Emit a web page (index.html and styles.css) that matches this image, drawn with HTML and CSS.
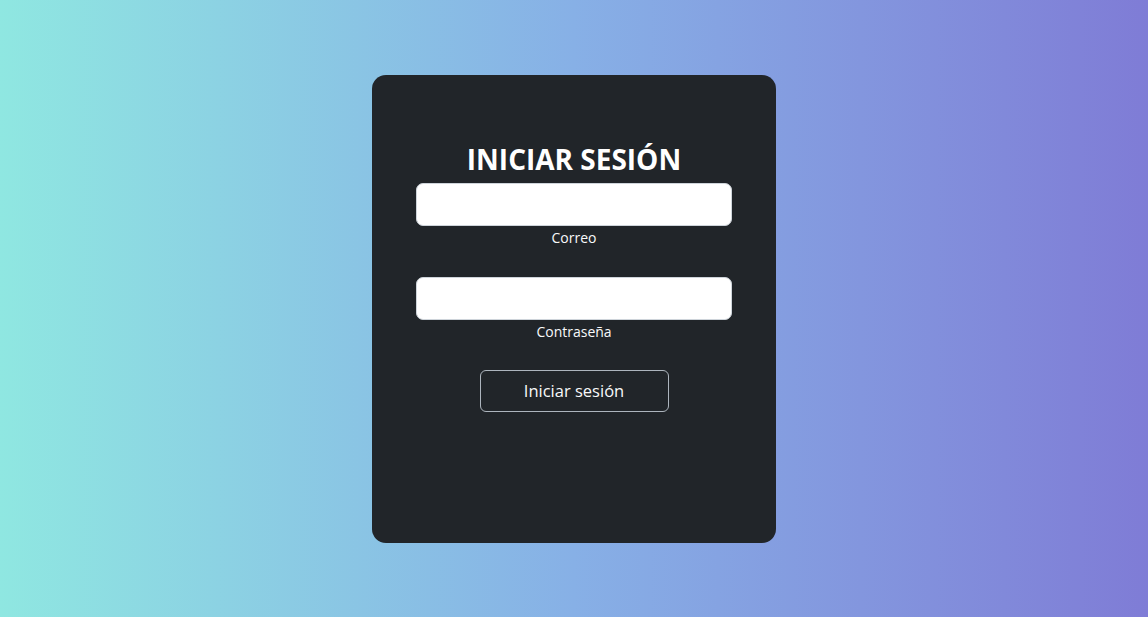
FILE: index.html
```html
<!DOCTYPE html>
<html lang="es">
<head>
<meta charset="utf-8">
<title>Iniciar sesión</title>
<link rel="stylesheet" href="styles.css">
</head>
<body>
  <main class="page">
    <form class="card">
      <h2 class="title">INICIAR SESIÓN</h2>
      <div class="field">
        <input class="input" type="email" id="correo">
        <label class="label" for="correo">Correo</label>
      </div>
      <div class="field">
        <input class="input" type="password" id="pass">
        <label class="label" for="pass">Contraseña</label>
      </div>
      <button class="btn" type="button">Iniciar sesión</button>
    </form>
  </main>
</body>
</html>
```
FILE: styles.css
```css
html, body {
  margin: 0;
  height: 100%;
}
body {
  background: linear-gradient(to right, #8fe7e1 0%, #87b0e6 50%, #7f7cd6 100%);
  font-family: "Open Sans", "Noto Sans", sans-serif;
  color: #f8f9fa;
}
.page {
  height: 100%;
  display: flex;
  align-items: center;
  justify-content: center;
}
.card {
  box-sizing: border-box;
  width: 404px;
  height: 468px;
  background: #212529;
  border-radius: 14px;
  padding: 66px 44px 0;
  display: flex;
  flex-direction: column;
  align-items: center;
}
.title {
  margin: 0 0 6px;
  font-size: 28px;
  line-height: 36px;
  font-weight: 700;
  color: #ffffff;
}
.field {
  width: 100%;
  display: flex;
  flex-direction: column;
  align-items: center;
  margin-bottom: 30px;
}
.input {
  box-sizing: border-box;
  width: 100%;
  height: 43px;
  border: 1px solid #ced4da;
  border-radius: 7px;
  background: #ffffff;
  margin: 0;
}
.label {
  margin-top: 3px;
  font-size: 14px;
  line-height: 18px;
  color: #f8f9fa;
}
.btn {
  box-sizing: border-box;
  width: 189px;
  height: 42px;
  margin-top: -1px;
  border: 1px solid #adb5bd;
  border-radius: 6px;
  background: transparent;
  color: #f8f9fa;
  font-family: inherit;
  font-size: 16.5px;
}
```
